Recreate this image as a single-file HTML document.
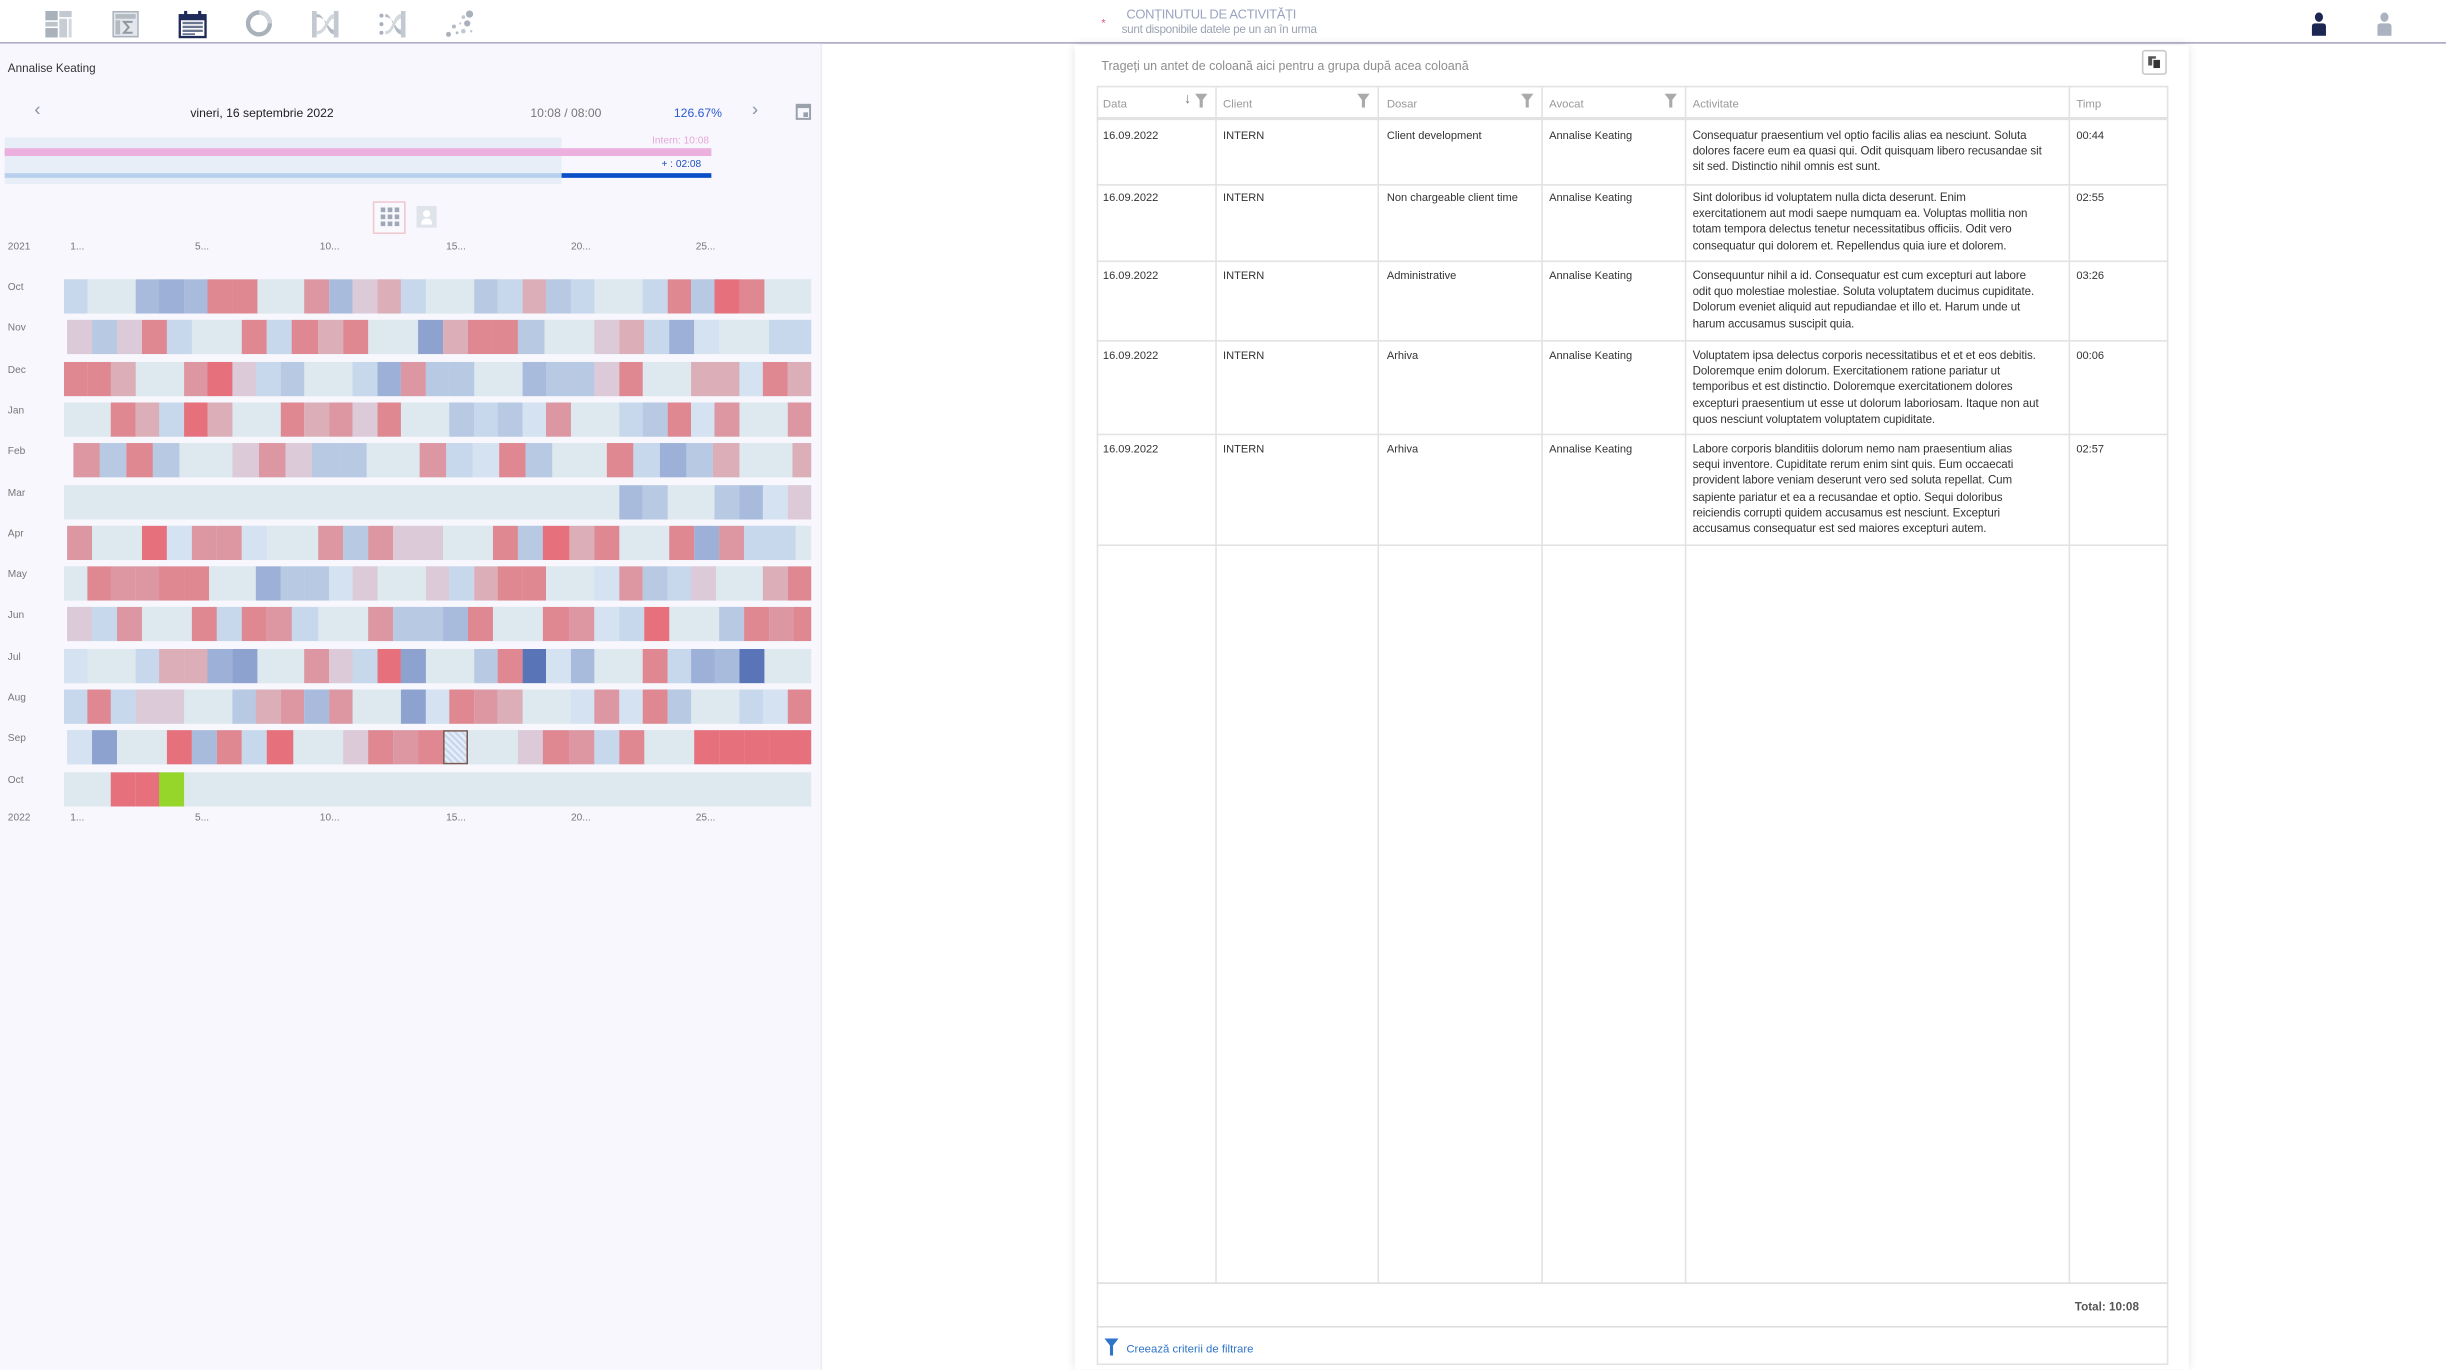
<!DOCTYPE html>
<html><head><meta charset="utf-8">
<style>
html,body{margin:0;padding:0;width:2446px;height:1370px;overflow:hidden;background:#fff;}
#w{position:absolute;left:0;top:0;width:1568px;height:878px;transform:scale(1.56);transform-origin:0 0;font-family:"Liberation Sans",sans-serif;color:#333;}
.a{position:absolute;}
.t{position:absolute;white-space:nowrap;}
#top{left:0;top:0;width:1568px;height:27px;background:#fff;border-bottom:1px solid #a7a4c2;}
#left{left:0;top:28px;width:526px;height:850px;background:#f7f7fd;border-right:1px solid #ececf4;}
#card{left:689px;top:29px;width:714px;height:849px;background:#fff;box-shadow:0 0 6px rgba(0,0,0,.12);}
.row{position:absolute;left:40px;width:480px;height:22px;overflow:hidden;}
.row div{position:absolute;top:0;height:22px;}
.ml{position:absolute;left:5px;font-size:6.5px;color:#777;}
.dl{position:absolute;font-size:6.5px;color:#777;}
.col{position:absolute;top:56px;bottom:0;border-left:1px solid #e2e2e2;}
</style></head><body><div id="w">
<div class="a" id="top">
 <svg class="a" style="left:29px;top:7px" width="17" height="17" viewBox="0 0 17 17"><rect x="0" y="0" width="8" height="6" fill="#a9b1bb"/><rect x="9" y="0" width="8" height="4" fill="#c2c9d1"/><rect x="0" y="7" width="8" height="3" fill="#bcc3cb"/><rect x="9" y="5" width="5" height="12" fill="#c7cdd4"/><rect x="15" y="5" width="2" height="12" fill="#d3d8dd"/><rect x="0" y="11" width="8" height="6" fill="#a9b1bb"/></svg>
 <svg class="a" style="left:72px;top:7px" width="17" height="17" viewBox="0 0 17 17"><rect x="0.5" y="0.5" width="16" height="16" fill="#e3e6ea" stroke="#a9b1bb"/><rect x="2" y="2" width="13" height="3" fill="#b3bac3"/><rect x="2" y="6" width="3" height="9" fill="#b3bac3"/><path d="M13 7H7.5L10.5 10.5 7.5 14H13" fill="none" stroke="#8f98a3" stroke-width="1.3"/></svg>
 <svg class="a" style="left:114px;top:6px" width="19" height="19" viewBox="0 0 19 19"><rect x="0.5" y="3" width="18" height="15.5" fill="#1f2b5a"/><rect x="2" y="7" width="15" height="10" fill="#fff"/><rect x="4" y="1" width="2" height="4" fill="#1f2b5a"/><rect x="13" y="1" width="2" height="4" fill="#1f2b5a"/><g fill="#6a7590"><rect x="3" y="8" width="13" height="1.5"/><rect x="3" y="10.5" width="13" height="1.5"/><rect x="3" y="13" width="13" height="1.5"/><rect x="3" y="15.3" width="8" height="1.2"/></g></svg>
 <svg class="a" style="left:157px;top:6px" width="18" height="18" viewBox="0 0 18 18"><circle cx="9" cy="9" r="7" fill="none" stroke="#a9b1bb" stroke-width="2.8"/><path d="M9 2A7 7 0 0 1 16 9" fill="none" stroke="#cfd4da" stroke-width="2.8"/></svg>
 <svg class="a" style="left:200px;top:7px" width="17" height="17" viewBox="0 0 17 17"><rect x="0" y="0" width="3" height="17" fill="#c2c9d1"/><rect x="14" y="0" width="3" height="17" fill="#c2c9d1"/><path d="M3 2C9 2 9 15 14 15V12C10 12 10 4 3 4Z" fill="#b3bac3"/><path d="M3 13C9 13 9 2 14 2V5C10 5 10 15 3 15Z" fill="#d3d8dd"/></svg>
 <svg class="a" style="left:243px;top:7px" width="17" height="17" viewBox="0 0 17 17"><circle cx="1.5" cy="3" r="1.3" fill="#a9b1bb"/><circle cx="1.5" cy="8.5" r="1.3" fill="#a9b1bb"/><circle cx="1.5" cy="14" r="1.3" fill="#a9b1bb"/><rect x="14" y="0" width="3" height="17" fill="#c2c9d1"/><path d="M4 2C9 2 9 15 14 15V12C10 12 10 4 4 4Z" fill="#b3bac3"/><path d="M4 13C9 13 9 2 14 2V5C10 5 10 15 4 15Z" fill="#d3d8dd"/></svg>
 <svg class="a" style="left:285px;top:6px" width="19" height="19" viewBox="0 0 19 19"><circle cx="16" cy="3" r="2.3" fill="#a9b1bb"/><circle cx="14.5" cy="9" r="2" fill="#a9b1bb"/><circle cx="12" cy="5" r="1.2" fill="#c2c9d1"/><circle cx="6" cy="11" r="1.3" fill="#b3bac3"/><circle cx="2.5" cy="16" r="1.6" fill="#a9b1bb"/><circle cx="8" cy="15" r="0.9" fill="#b3bac3"/><circle cx="12" cy="14" r="1.5" fill="#c2c9d1"/><circle cx="17" cy="14" r="0.8" fill="#c2c9d1"/><circle cx="10" cy="9" r="0.7" fill="#c2c9d1"/></svg>
 <div class="t" style="left:722px;top:4px;font-size:8.3px;color:#9aa3c0;letter-spacing:-0.2px">CONȚINUTUL DE ACTIVITĂȚI</div>
 <div class="t" style="left:706px;top:12px;font-size:7px;color:#e2507c">*</div>
 <div class="t" style="left:719px;top:14px;font-size:7.5px;color:#9aa3b0;letter-spacing:-0.2px">sunt disponibile datele pe un an în urma</div>
 <svg class="a" style="left:1481px;top:8px" width="11" height="15" viewBox="0 0 11 15"><ellipse cx="5.5" cy="3" rx="2.6" ry="3" fill="#1c2652"/><path d="M1 15V9Q1 7 3 7H8Q10 7 10 9V15Z" fill="#1c2652"/></svg>
 <svg class="a" style="left:1523px;top:8px" width="11" height="15" viewBox="0 0 11 15"><ellipse cx="5.5" cy="3" rx="2.6" ry="3" fill="#aab3bf"/><path d="M1 15V9Q1 7 3 7H8Q10 7 10 9V15Z" fill="#aab3bf"/></svg>
</div>

<div class="a" id="left">
 <div class="t" style="left:5px;top:11px;font-size:7.5px;color:#333">Annalise Keating</div>
 <div class="t" style="left:22px;top:35px;font-size:12px;color:#8a93a3">&#x2039;</div>
 <div class="t" style="left:122px;top:40px;font-size:7.8px;color:#222">vineri, 16 septembrie 2022</div>
 <div class="t" style="left:340px;top:40px;font-size:7.8px;color:#777">10:08 / 08:00</div>
 <div class="t" style="left:432px;top:40px;font-size:7.8px;color:#2c5bd0">126.67%</div>
 <div class="t" style="left:482px;top:35px;font-size:12px;color:#8a93a3">&#x203A;</div>
 <svg class="a" style="left:510px;top:38px" width="10" height="11" viewBox="0 0 10 11"><rect x="0.7" y="1.2" width="8.6" height="9" fill="none" stroke="#9aa1ab" stroke-width="1.3"/><rect x="0.7" y="1" width="8.6" height="2.3" fill="#9aa1ab"/><rect x="5" y="6" width="3" height="3" fill="#9aa1ab"/></svg>
 <div class="a" style="left:3px;top:60px;width:357px;height:30px;background:#e8eef8"></div>
 <div class="t" style="left:418px;top:59px;font-size:6.5px;color:#e7a7d8">Intern: 10:08</div>
 <div class="a" style="left:3px;top:67px;width:453px;height:5px;background:#ebb0dd"></div>
 <div class="t" style="left:424px;top:74px;font-size:6.5px;color:#1d4fc0">+ : 02:08</div>
 <div class="a" style="left:3px;top:83px;width:357px;height:2.5px;background:#b8d0ee"></div>
 <div class="a" style="left:360px;top:83px;width:96px;height:2.5px;background:#0a4fc8"></div>
 <div class="a" style="left:239px;top:101px;width:21px;height:21px;border:1px solid #f0c8d0;box-sizing:border-box;background:#f9f8fd"></div>
 <svg class="a" style="left:244px;top:105px" width="12" height="12" viewBox="0 0 12 12" fill="#a0a8b8"><rect x="0" y="0" width="3" height="3"/><rect x="4.5" y="0" width="3" height="3"/><rect x="9" y="0" width="3" height="3"/><rect x="0" y="4.5" width="3" height="3"/><rect x="4.5" y="4.5" width="3" height="3"/><rect x="9" y="4.5" width="3" height="3"/><rect x="0" y="9" width="3" height="3"/><rect x="4.5" y="9" width="3" height="3"/><rect x="9" y="9" width="3" height="3"/></svg>
 <svg class="a" style="left:267px;top:104px" width="13" height="14" viewBox="0 0 13 14"><rect width="13" height="14" fill="#dfe3ea"/><circle cx="6.5" cy="5" r="2.3" fill="#fff"/><path d="M3 12Q3 8 6.5 8Q10 8 10 12Z" fill="#fff"/></svg>
 <div id="hm"></div>
</div>

<div class="a" id="card">
 <div class="t" style="left:17px;top:9px;font-size:8px;color:#8d8d8d">Trageți un antet de coloană aici pentru a grupa după acea coloană</div>
 <div class="a" style="left:684px;top:3px;width:16px;height:16px;border:1px solid #c8c8c8;border-radius:2px;box-sizing:border-box"></div>
 <svg class="a" style="left:688px;top:7px" width="8" height="8" viewBox="0 0 8 8"><rect x="0" y="0" width="5" height="6" fill="#555"/><rect x="3" y="2" width="5" height="6" fill="#333" stroke="#fff" stroke-width="0.8"/></svg>
 <div class="a" style="left:14px;top:26px;width:687px;height:820px;border:1px solid #e2e2e2;box-sizing:border-box"></div>
</div>

<div class="a" style="left:703px;top:56px;width:687px;height:766px;">
 <div class="col" style="left:76px;top:0"></div>
 <div class="col" style="left:180px;top:0"></div>
 <div class="col" style="left:285px;top:0"></div>
 <div class="col" style="left:377px;top:0"></div>
 <div class="col" style="left:623px;top:0"></div>
 <div class="a" style="left:0;top:19px;width:687px;height:2px;background:#e2e2e2"></div>
 <div class="t" style="left:4px;top:6px;font-size:7.3px;color:#999">Data</div>
 <div class="t" style="left:81px;top:6px;font-size:7.3px;color:#999">Client</div>
 <div class="t" style="left:186px;top:6px;font-size:7.3px;color:#999">Dosar</div>
 <div class="t" style="left:290px;top:6px;font-size:7.3px;color:#999">Avocat</div>
 <div class="t" style="left:382px;top:6px;font-size:7.3px;color:#999">Activitate</div>
 <div class="t" style="left:628px;top:6px;font-size:7.3px;color:#999">Timp</div>
 <div class="t" style="left:56px;top:2px;font-size:9px;color:#777">&#x2193;</div>
 <svg class="a" style="left:63px;top:4px" width="8" height="9" viewBox="0 0 8 9"><path d="M0 0H8L5 4V9H3V4Z" fill="#aaa"/></svg>
 <svg class="a" style="left:167px;top:4px" width="8" height="9" viewBox="0 0 8 9"><path d="M0 0H8L5 4V9H3V4Z" fill="#aaa"/></svg>
 <svg class="a" style="left:272px;top:4px" width="8" height="9" viewBox="0 0 8 9"><path d="M0 0H8L5 4V9H3V4Z" fill="#aaa"/></svg>
 <svg class="a" style="left:364px;top:4px" width="8" height="9" viewBox="0 0 8 9"><path d="M0 0H8L5 4V9H3V4Z" fill="#aaa"/></svg>
 <div id="rows"></div>
</div>
<div class="a" style="left:703px;top:822px;width:687px;height:1px;background:#ddd"></div>
<div class="t" style="left:1330px;top:833px;font-size:7.5px;color:#555;font-weight:bold">Total: 10:08</div>
<div class="a" style="left:703px;top:850px;width:687px;height:1px;background:#ddd"></div>
<svg class="a" style="left:708px;top:858px" width="9" height="11" viewBox="0 0 9 11"><path d="M0 0H9L5.5 4.5V11H3.5V4.5Z" fill="#2e74c8"/></svg>
<div class="t" style="left:722px;top:860px;font-size:7.3px;color:#2e74c8">Creează criterii de filtrare</div>
</div>
<script>
var C={e:'#dde9ee',a:'#c7d7ec',b:'#b8c9e4',c:'#a8bbdd',d:'#9db0d8',D:'#8ea2d0',N:'#5a74b8',p:'#dccad8',q:'#dcaeb8',r:'#dc97a3',s:'#df8892',R:'#e6707c',f:'#d4e2f2',g:'#96d62a'};
var rows=[
['Oct','aeecdcsseercpqaeebaqbaeeasbRsee',40.5,15.48],
['Nov','pbpsaeesasqseeDqssbeepqadfeeaa',42.5,16.1],
['Dec','ssqeerRpabeeadrbbeecbbpseeqqfsq',40.5,15.48],
['Jan','eesqaRqeesqrpseebabfreeabsfreer',40.5,15.48],
['Feb','rbsbeeprpbbeerafsbeesadbqeeq',46.5,17.1],
['Mar','eeeeeeeeeeeeeeeeeeeeeeecbeebcfp',40.5,15.48],
['Apr','reeRfrrfeerbrppeesbRqseesdraae',42.5,16.1],
['May','esrrsseedbbfpeepaqsseefrbapeeqs',40.5,15.48],
['Jun','pareesasraeerbbcseesrfaReebsrs',42.5,16.1],
['Jul','feeaqqdDeerpaRDeebsNfceesadcNee',40.5,15.48],
['Aug','asappeebqrcreeDfsrqeefrfsbeeafs',40.5,15.48],
['Sep','fDeeRcsaReepsrsxeepsraseeRRRRR',42.5,16.1],
['Oct','eeRRgeeeeeeeeeeeeeeeeeeeeeeeeee',40.5,15.48]];
var h='';
rows.forEach(function(r,i){
 var y=151+i*26.3;
 h+='<div class="ml" style="top:'+(y+2)+'px">'+r[0]+'</div>';
 h+='<div class="row" style="top:'+y+'px;left:'+r[2]+'px;width:'+(520-r[2])+'px;background:'+C.e+'">';
 for(var k=0;k<r[1].length;k++){
  var ch=r[1][k],x=k*r[3];
  if(ch=='e')continue;
  var st='left:'+x.toFixed(2)+'px;width:'+(r[3]+0.2).toFixed(2)+'px;';
  if(ch=='x')st+='background:repeating-linear-gradient(45deg,#c8d6ee 0 1.5px,#e6eef8 1.5px 3px);border:1.5px solid #7a5a50;box-sizing:border-box;height:22px;';
  else st+='background:'+C[ch]+';';
  h+='<div style="'+st+'"></div>';
 }
 h+='</div>';
});
function lab(y,yr){var s='<div class="ml" style="top:'+y+'px">'+yr+'</div>';[[45,'1...'],[125,'5...'],[205,'10...'],[286,'15...'],[366,'20...'],[446,'25...']].forEach(function(d){s+='<div class="dl" style="left:'+d[0]+'px;top:'+y+'px">'+d[1]+'</div>';});return s;}
h+=lab(127,'2021')+lab(493,'2022');
document.getElementById('hm').innerHTML=h;
var data=[
[21,41,'Client development','Consequatur praesentium vel optio facilis alias ea nesciunt. Soluta<br>dolores facere eum ea quasi qui. Odit quisquam libero recusandae sit<br>sit sed. Distinctio nihil omnis est sunt.','00:44'],
[61,50,'Non chargeable client time','Sint doloribus id voluptatem nulla dicta deserunt. Enim<br>exercitationem aut modi saepe numquam ea. Voluptas mollitia non<br>totam tempora delectus tenetur necessitatibus officiis. Odit vero<br>consequatur qui dolorem et. Repellendus quia iure et dolorem.','02:55'],
[111,51,'Administrative','Consequuntur nihil a id. Consequatur est cum excepturi aut labore<br>odit quo molestiae molestiae. Soluta voluptatem ducimus cupiditate.<br>Dolorum eveniet aliquid aut repudiandae et illo et. Harum unde ut<br>harum accusamus suscipit quia.','03:26'],
[162,60,'Arhiva','Voluptatem ipsa delectus corporis necessitatibus et et et eos debitis.<br>Doloremque enim dolorum. Exercitationem ratione pariatur ut<br>temporibus et est distinctio. Doloremque exercitationem dolores<br>excepturi praesentium ut esse ut dolorum laboriosam. Itaque non aut<br>quos nesciunt voluptatem voluptatem cupiditate.','00:06'],
[222,71,'Arhiva','Labore corporis blanditiis dolorum nemo nam praesentium alias<br>sequi inventore. Cupiditate rerum enim sint quis. Eum occaecati<br>provident labore veniam deserunt vero sed soluta repellat. Cum<br>sapiente pariatur et ea a recusandae et optio. Sequi doloribus<br>reiciendis corrupti quidem accusamus est nesciunt. Excepturi<br>accusamus consequatur est sed maiores excepturi autem.','02:57']];
var s='';
data.forEach(function(d){
 var y=d[0],f='font-size:7.1px;color:#333;line-height:10.2px;';
 var f2='font-size:7.4px;color:#333;line-height:10.2px;letter-spacing:-0.05px;';
 s+='<div class="t" style="left:4px;top:'+(y+5)+'px;'+f+'">16.09.2022</div>';
 s+='<div class="t" style="left:81px;top:'+(y+5)+'px;'+f+'">INTERN</div>';
 s+='<div class="t" style="left:186px;top:'+(y+5)+'px;'+f+'">'+d[2]+'</div>';
 s+='<div class="t" style="left:290px;top:'+(y+5)+'px;'+f+'">Annalise Keating</div>';
 s+='<div class="t" style="left:382px;top:'+(y+5)+'px;'+f2+'">'+d[3]+'</div>';
 s+='<div class="t" style="left:628px;top:'+(y+5)+'px;'+f+'">'+d[4]+'</div>';
 s+='<div class="a" style="left:0;top:'+(y+d[1])+'px;width:687px;height:1px;background:#e2e2e2"></div>';
});
document.getElementById('rows').innerHTML=s;
</script>
</body></html>
